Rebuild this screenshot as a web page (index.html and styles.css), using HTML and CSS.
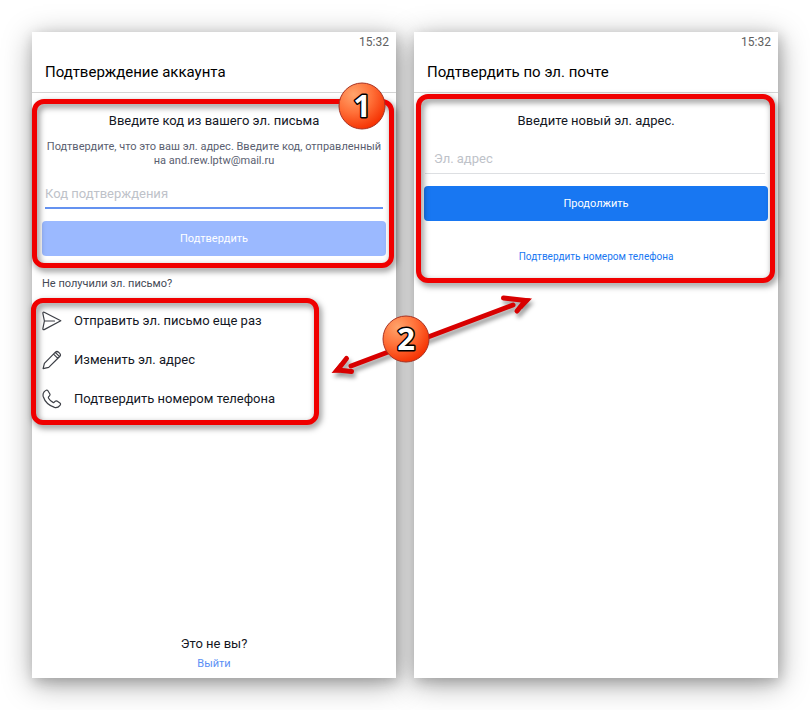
FILE: index.html
```
<!DOCTYPE html>
<html lang="ru">
<head>
<meta charset="utf-8">
<meta name="viewport" content="width=device-width, initial-scale=1">
<title>Подтверждение аккаунта</title>
<link rel="stylesheet" href="styles.css">
</head>
<body>
<div class="stage">

  <main class="phone">
    <div class="status">15:32</div>
    <h1 class="title">Подтверждение аккаунта</h1>

    <form class="block block-code frame">
      <h2 class="heading">Введите код из вашего эл. письма</h2>
      <p class="hint">Подтвердите, что это ваш эл. адрес. Введите код, отправленный<br>на and.rew.lptw@mail.ru</p>
      <input class="field field-code" type="text" placeholder="Код подтверждения" aria-label="Код подтверждения">
      <button class="btn btn-light" type="button">Подтвердить</button>
      <svg class="badge badge-one" viewBox="0 0 48 48" aria-hidden="true">
        <defs>
          <radialGradient id="ball" cx="32%" cy="25%" r="80%">
            <stop offset="0" stop-color="#ffa46c"/>
            <stop offset="0.5" stop-color="#ff7038"/>
            <stop offset="1" stop-color="#f52f00"/>
          </radialGradient>
        </defs>
        <circle cx="24" cy="24" r="23" fill="url(#ball)" stroke="#a83222"/>
        <text class="badge-text" x="24" y="35">1</text>
      </svg>
    </form>

    <p class="question">Не получили эл. письмо?</p>
    <nav class="options frame">
      <a class="option" href="#">
        <svg class="icon" viewBox="0 0 20 20"><path d="M2.2 1.2 L18.8 9.8 L2.2 18.6 Q0.6 19 0.9 17.3 L2.4 10 L0.9 2.6 Q0.6 0.7 2.2 1.2 Z M2.4 10 H12.5"/></svg>
        Отправить эл. письмо еще раз
      </a>
      <a class="option" href="#">
        <svg class="icon" viewBox="0 0 20 20"><path d="M1.1 18.6 L2.4 13.4 L13.4 2.2 Q15 0.8 16.5 2.2 L17.7 3.4 Q19.2 5 17.7 6.5 L6.7 17.4 Z M11.6 4.1 L15.8 8.3 M13.3 2.4 L17.5 6.6"/></svg>
        Изменить эл. адрес
      </a>
      <a class="option" href="#">
        <svg class="icon" viewBox="0 0 20 20"><path d="M2 3 Q4.500 0.200 5.900 1.700 L7.900 5 Q8.300 5.900 7.500 6.800 L6.500 7.900 Q6.200 8.500 6.600 9.200 Q8.300 12.100 11 13.400 Q11.800 13.800 12.300 13.200 L13.300 12.200 Q14 11.600 15 12.100 L17.900 13.900 Q19.200 14.900 18 16.300 Q15.700 19.200 12.500 18.400 Q3.800 15.500 1.200 7.500 Q0.600 4.800 2 3 Z"/></svg>
        Подтвердить номером телефона
      </a>
    </nav>

    <footer class="bottom">
      <p class="heading">Это не вы?</p>
      <a class="logout" href="#">Выйти</a>
    </footer>
  </main>

  <section class="phone">
    <div class="status">15:32</div>
    <h1 class="title">Подтвердить по эл. почте</h1>

    <form class="block block-mail frame">
      <h2 class="heading">Введите новый эл. адрес.</h2>
      <input class="field field-mail" type="email" placeholder="Эл. адрес" aria-label="Эл. адрес">
      <button class="btn btn-blue" type="button">Продолжить</button>
      <a class="by-phone" href="#">Подтвердить номером телефона</a>
    </form>
  </section>

  <!-- arrow joining both frames -->
  <svg class="arrow" viewBox="0 0 210 90" aria-hidden="true">
    <g class="arrow-lines">
      <path d="M25 75 L187 14"/>
      <path d="M20.500 67.500 L11.500 79 L25.500 80.500"/>
      <path d="M177.500 7 L199.500 9.500 L191 20"/>
      <path class="arrow-tip" d="M5.500 82 L14 72 V81.500 Z M206 7.500 L196 7 V18 Z"/>
    </g>
    <circle cx="80" cy="48" r="23" fill="url(#ball)" stroke="#a83222"/>
    <text class="badge-text" x="80" y="59">2</text>
  </svg>

</div>
</body>
</html>
```
FILE: styles.css
```
* {
  box-sizing: border-box;
}

body {
  margin: 0;
  background-color: #fff;
  color: #14171f;
  font-family: Roboto, "Liberation Sans", sans-serif;
  font-size: 13px;
}

h1, h2, p {
  margin: 0;
  font-weight: 400;
}

a {
  text-decoration: none;
}

.stage {
  position: relative;
  z-index: 0;
  display: flex;
  gap: 18px;
  min-height: 100vh;
  padding: 32px;
}

.phone {
  position: relative;
  flex: 1;
  display: flex;
  flex-direction: column;
  min-width: 0;
  background-color: #fff;
}

/* shadow sits under both screens */
.phone::before {
  content: "";
  position: absolute;
  inset: 0;
  z-index: -1;
  box-shadow: 1px 6px 28px rgba(0, 0, 0, 0.35), 2px 4px 12px rgba(0, 0, 0, 0.18);
}

.status {
  height: 20px;
  padding-right: 7px;
  color: #606060;
  font-size: 12px;
  line-height: 20px;
  text-align: right;
}

.title {
  padding-left: 13px;
  border-bottom: 1px solid #d4d4d4;
  color: #000;
  font-size: 15px;
  line-height: 40px;
}

.block {
  display: flex;
  flex-direction: column;
  padding: 18px 10px 12px;
}

.block-mail {
  padding-bottom: 16px;
}

/* red highlight */
.frame {
  position: relative;
}

.frame::after {
  content: "";
  position: absolute;
  inset: 6px 2px 0 0;
  border: 5px solid #f00000;
  border-radius: 12px;
  filter: drop-shadow(2px 3px 3px rgba(0, 0, 0, 0.5));
  pointer-events: none;
}

.options::after {
  inset: -3px -1px -7px -1px;
}

.block-mail::after {
  inset: 1px 3px 0 2px;
}

.heading {
  font-size: 13px;
  line-height: 20px;
  text-align: center;
}

.hint {
  margin-top: 9px;
  color: #5a6070;
  font-size: 11px;
  line-height: 14px;
  text-align: center;
}

.field {
  height: 30px;
  padding: 0;
  border: 0;
  border-radius: 0;
  background: none;
  color: #14171f;
  font: inherit;
  outline: none;
}

.field::placeholder {
  color: #bec2c9;
}

.field-code {
  margin: 11px 3px 12px;
  border-bottom: 2px solid #6492f0;
}

.field-mail {
  margin: 13px 3px 12px 1px;
  padding-left: 9px;
  border-bottom: 1px solid #dddfe2;
}

.btn {
  height: 35px;
  border: 0;
  border-radius: 4px;
  color: #fff;
  font: inherit;
  font-size: 11px;
}

.btn-light {
  background-color: #9bb9ff;
}

.btn-blue {
  background-color: #1877f2;
}

.by-phone {
  margin-top: 26px;
  color: #1877f2;
  font-size: 10px;
  line-height: 20px;
  text-align: center;
}

.question {
  padding: 6px 10px 7px;
  color: #444955;
  font-size: 11px;
  line-height: 20px;
}

.options {
  align-self: flex-start;
  padding: 0 43px 0 10px;
}

.option {
  display: flex;
  align-items: center;
  gap: 12px;
  height: 39px;
  color: #14171f;
  font-size: 13px;
}

.icon {
  width: 20px;
  height: 20px;
  fill: none;
  stroke: #3c3f46;
  stroke-width: 1.2;
  stroke-linejoin: round;
  stroke-linecap: round;
}

.bottom {
  display: flex;
  flex-direction: column;
  margin-top: auto;
  padding-bottom: 4px;
  text-align: center;
}

.logout {
  color: #5b8ff5;
  font-size: 11px;
  line-height: 20px;
}

.badge {
  position: absolute;
  z-index: 2;
  width: 48px;
  height: 48px;
}

.badge-one {
  top: -11px;
  right: 10px;
}

.badge-text {
  fill: #fff;
  stroke: #000;
  stroke-width: 3;
  stroke-linejoin: round;
  paint-order: stroke;
  font-family: "Noto Sans", sans-serif;
  font-size: 31px;
  font-weight: 700;
  text-anchor: middle;
}

.arrow {
  position: absolute;
  z-index: 3;
  top: 291px;
  left: calc(50% - 79px);
  width: 210px;
  height: 90px;
  overflow: visible;
}

.arrow-lines {
  fill: none;
  stroke: #d80000;
  stroke-width: 5;
  stroke-linecap: round;
  filter: drop-shadow(2px 4px 2px rgba(0, 0, 0, 0.4));
}

.arrow-tip {
  fill: #d80000;
  stroke: none;
}
```
